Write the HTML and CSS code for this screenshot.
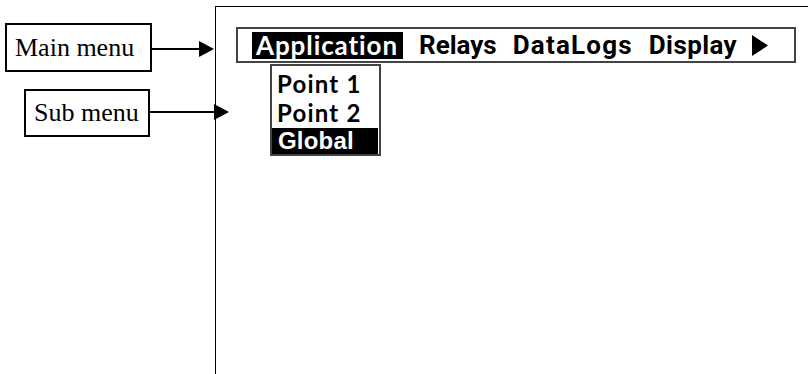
FILE: index.html
```html
<!DOCTYPE html>
<html>
<head>
<meta charset="utf-8">
<link rel="stylesheet" href="styles.css">
</head>
<body>
<div class="page">
  <div class="labels">
    <div class="label-row row-main">
      <div class="label-box box-main">Main menu</div>
      <div class="connector"></div>
      <svg class="head" width="15" height="16" viewBox="0 0 15 16"><polygon points="0,0 15,8 0,16" fill="#000"/></svg>
    </div>
    <div class="label-row row-sub">
      <div class="label-box box-sub">Sub menu</div>
      <div class="connector"></div>
      <svg class="head" width="15" height="16" viewBox="0 0 15 16"><polygon points="0,0 15,8 0,16" fill="#000"/></svg>
    </div>
  </div>
  <div class="screen">
    <div class="menubar">
      <span class="item item-app">Application</span>
      <span class="item item-relays">Relays</span>
      <span class="item item-logs">DataLogs</span>
      <span class="item item-display">Display</span>
      <svg class="more" width="16" height="21" viewBox="0 0 16 21"><polygon points="0,0 16,10.5 0,21" fill="#000"/></svg>
    </div>
    <div class="submenu">
      <div class="sub-item">Point 1</div>
      <div class="sub-item">Point 2</div>
      <div class="sub-item sub-active">Global</div>
    </div>
  </div>
</div>
</body>
</html>
```

FILE: styles.css
```css
html, body {
  margin: 0;
  padding: 0;
  background: #fff;
}

.page {
  width: 808px;
  height: 374px;
  overflow: hidden;
  display: flex;
}

.labels {
  width: 215px;
  flex: none;
  padding-top: 23px;
  display: flex;
  flex-direction: column;
  box-sizing: border-box;
}

.label-row {
  display: flex;
  align-items: center;
  flex: none;
}

.row-main {
  margin-left: 5px;
  width: 209px;
}

.row-sub {
  margin-left: 24px;
  margin-top: 17px;
  width: 205px;
}

.label-box {
  box-sizing: border-box;
  border: 2px solid #000;
  font-family: "Liberation Serif", "Times New Roman", serif;
  font-size: 26px;
  color: #000;
  display: flex;
  align-items: center;
  flex: none;
}

.box-main {
  width: 147px;
  height: 49px;
  padding-left: 8px;
}

.box-sub {
  width: 126px;
  height: 48px;
  padding-left: 8px;
}

.connector {
  flex: 1;
  height: 2px;
  background: #000;
}

.row-main .connector,
.row-main .head {
  margin-top: 3px;
}

.row-sub .connector,
.row-sub .head {
  margin-top: -3px;
}

.head {
  display: block;
  flex: none;
}

.screen {
  flex: 1;
  margin-top: 6px;
  border-top: 1px solid #000;
  border-left: 1px solid #000;
  height: 368px;
  box-sizing: border-box;
}

.menubar {
  margin: 20px 0 0 20px;
  width: 560px;
  height: 36px;
  box-sizing: border-box;
  border: 2px solid #444;
  display: flex;
  align-items: center;
  padding-left: 14px;
  gap: 16px;
}

.item {
  font-family: Roboto, "Liberation Sans", Arial, sans-serif;
  font-weight: bold;
  font-size: 26px;
  color: #000;
  line-height: 27px;
}

.item-app {
  font-family: Lato, "Open Sans", sans-serif;
  font-weight: bold;
  font-size: 26px;
  letter-spacing: 0.9px;
  background: #000;
  color: #fff;
  padding: 0 5px 0 4px;
  height: 27px;
}

.item-logs {
  letter-spacing: 1.2px;
}

.item-display {
  letter-spacing: 0.4px;
}

.more {
  display: block;
  margin-left: -1px;
}

.submenu {
  margin: 1px 0 0 54px;
  width: 111px;
  box-sizing: border-box;
  border: 2px solid #444;
  padding-top: 3px;
}

.sub-item {
  font-family: Lato, "Open Sans", sans-serif;
  font-weight: bold;
  font-size: 24px;
  letter-spacing: 1.2px;
  line-height: 29px;
  padding-left: 5px;
  color: #000;
}

.sub-active {
  font-family: "Liberation Sans", Arial, sans-serif;
  font-weight: bold;
  font-size: 24px;
  letter-spacing: 0.2px;
  line-height: 26px;
  height: 26px;
  background: #000;
  color: #fff;
  padding-left: 6px;
  margin-right: 1px;
  margin-top: 1px;
}
```
